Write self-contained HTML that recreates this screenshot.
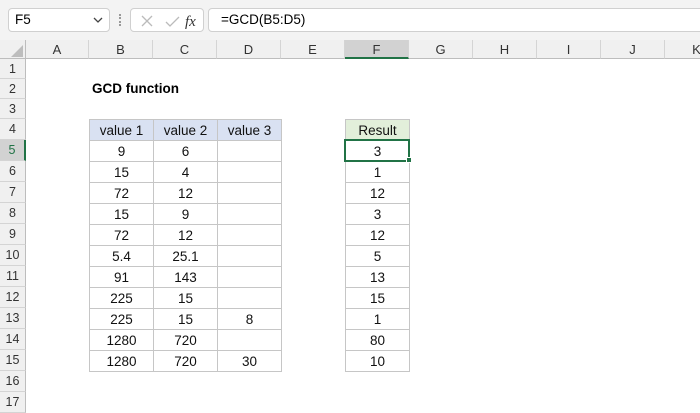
<!DOCTYPE html><html><head><style>
body{margin:0;width:700px;height:400px;overflow:hidden;background:#fff;font-family:"Liberation Sans",sans-serif;position:relative}
.a{position:absolute;box-sizing:border-box}
.ch{top:40px;height:19px;border-right:1px solid #d4d4d4;background:#f0f0f0;font-size:13px;text-align:center;line-height:19px;color:#333;border-bottom:1px solid #bdbdbd}
.rh{left:0;width:26px;background:#f0f0f0;border-bottom:1px solid #d4d4d4;border-right:1px solid #bdbdbd;font-size:12.5px;text-align:center;color:#333}
.c{border:1px solid #c6c6c6;font-size:13.5px;text-align:center;color:#111;margin:-1px 0 0 -1px}
</style></head><body>
<div class="a" style="left:0;top:0;width:700px;height:40px;background:#f3f3f3"></div>
<div class="a" style="left:8px;top:8px;width:102px;height:24px;background:#fff;border:1px solid #d0d0d0;border-radius:4px;font-size:13.5px;line-height:22px;padding-left:6px">F5</div>
<svg class="a" style="left:92px;top:15px" width="12" height="10"><path d="M2 3l4 4 4-4" stroke="#444" stroke-width="1.3" fill="none"/></svg>
<div class="a" style="left:119px;top:14px;width:2px;height:12px;border-left:2px dotted #999"></div>
<div class="a" style="left:130px;top:8px;width:74px;height:24px;background:#fff;border:1px solid #d0d0d0;border-radius:4px"></div>
<svg class="a" style="left:136px;top:12px" width="70" height="18"><path d="M6 4l10 10M16 4L6 14" stroke="#bbb" stroke-width="1.3"/><path d="M30 10l4 4 9-9" stroke="#bbb" stroke-width="1.3" fill="none"/><text x="49" y="14" font-family="Liberation Serif" font-style="italic" font-size="15" fill="#333">fx</text></svg>
<div class="a" style="left:208px;top:8px;width:500px;height:24px;background:#fff;border:1px solid #d0d0d0;border-radius:4px;font-size:13.5px;line-height:22px;padding-left:12px">=GCD(B5:D5)</div>
<div class="a" style="left:0;top:40px;width:26px;height:19px;background:#f0f0f0;border-right:1px solid #bdbdbd;border-bottom:1px solid #bdbdbd"></div>
<svg class="a" style="left:10px;top:45px" width="14" height="12"><path d="M13 0V12H1Z" fill="#bdbdbd"/></svg>
<div class="a ch" style="left:26px;width:63px">A</div>
<div class="a ch" style="left:89px;width:64px">B</div>
<div class="a ch" style="left:153px;width:64px">C</div>
<div class="a ch" style="left:217px;width:64px">D</div>
<div class="a ch" style="left:281px;width:64px">E</div>
<div class="a ch" style="left:345px;width:64px;background:#d2d2d2;border-bottom:2px solid #217346">F</div>
<div class="a ch" style="left:409px;width:64px">G</div>
<div class="a ch" style="left:473px;width:64px">H</div>
<div class="a ch" style="left:537px;width:64px">I</div>
<div class="a ch" style="left:601px;width:64px">J</div>
<div class="a ch" style="left:665px;width:64px">K</div>
<div class="a rh" style="top:59px;height:20px;line-height:20px">1</div>
<div class="a rh" style="top:79px;height:20px;line-height:20px">2</div>
<div class="a rh" style="top:99px;height:20px;line-height:20px">3</div>
<div class="a rh" style="top:119px;height:21px;line-height:21px">4</div>
<div class="a rh" style="top:140px;height:21px;line-height:21px;background:#d2d2d2;border-right:2px solid #217346;color:#217346">5</div>
<div class="a rh" style="top:161px;height:21px;line-height:21px">6</div>
<div class="a rh" style="top:182px;height:21px;line-height:21px">7</div>
<div class="a rh" style="top:203px;height:21px;line-height:21px">8</div>
<div class="a rh" style="top:224px;height:21px;line-height:21px">9</div>
<div class="a rh" style="top:245px;height:21px;line-height:21px">10</div>
<div class="a rh" style="top:266px;height:21px;line-height:21px">11</div>
<div class="a rh" style="top:287px;height:21px;line-height:21px">12</div>
<div class="a rh" style="top:308px;height:21px;line-height:21px">13</div>
<div class="a rh" style="top:329px;height:21px;line-height:21px">14</div>
<div class="a rh" style="top:350px;height:21px;line-height:21px">15</div>
<div class="a rh" style="top:371px;height:21px;line-height:21px">16</div>
<div class="a rh" style="top:392px;height:21px;line-height:21px">17</div>
<div class="a" style="left:92px;top:79px;height:20px;line-height:20px;font-size:13.5px;font-weight:bold">GCD function</div>
<div id="t"></div>
<script>
var B=["9","15","72","15","72","5.4","91","225","225","1280","1280"],C=["6","4","12","9","12","25.1","143","15","15","720","720"],D=["","","","","","","","","8","","30"],F=["3","1","12","3","12","5","13","15","1","80","10"];
var h="";function cell(x,y,w,t,bg){h+='<div class="a c" style="left:'+x+'px;top:'+y+'px;width:'+(w+1)+'px;height:22px;line-height:21px;'+(bg?'background:'+bg:'')+'">'+t+'</div>';}
cell(90,120,64,"value 1","#d9e1f2");cell(154,120,64,"value 2","#d9e1f2");cell(218,120,64,"value 3","#d9e1f2");cell(346,120,64,"Result","#e2efda");
for(var i=0;i<11;i++){var y=141+21*i;cell(90,y,64,B[i]);cell(154,y,64,C[i]);cell(218,y,64,D[i]);cell(346,y,64,F[i]);}
document.getElementById("t").innerHTML=h;
</script>
<div class="a" style="left:344px;top:139px;width:66px;height:23px;border:2px solid #217346"></div>
<div class="a" style="left:406px;top:157px;width:6px;height:6px;background:#217346;border:1px solid #fff"></div>
</body></html>
